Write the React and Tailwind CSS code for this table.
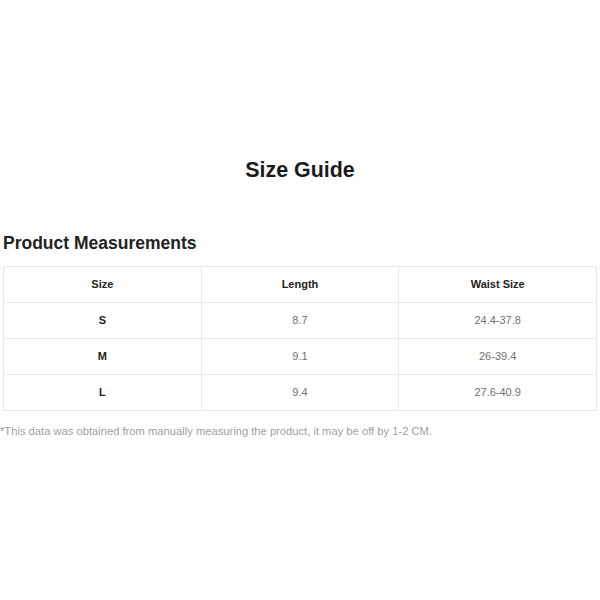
const rows = [
  { size: 'S', length: '8.7', waist: '24.4-37.8' },
  { size: 'M', length: '9.1', waist: '26-39.4' },
  { size: 'L', length: '9.4', waist: '27.6-40.9' },
];

export default function App() {
  return (
    <div className="w-[600px] h-[600px] bg-white px-[3px] pt-[158px] font-['Liberation_Sans',Arial,sans-serif]">
      <h1 className="text-center text-[21.4px] leading-[24px] font-bold text-[#1a1a1a]">Size Guide</h1>

      <h2 className="mt-[49px] mb-[11px] text-[17.5px] leading-[24px] font-bold text-[#222]">Product Measurements</h2>

      <table className="w-[594px] table-fixed border-collapse text-[11px]">
        <thead>
          <tr className="h-[36px]">
            <th className="border border-[#e8e8e8] font-bold text-[#222]">Size</th>
            <th className="border border-[#e8e8e8] font-bold text-[#222]">Length</th>
            <th className="border border-[#e8e8e8] font-bold text-[#222]">Waist Size</th>
          </tr>
        </thead>
        <tbody>
          {rows.map((r) => (
            <tr key={r.size} className="h-[36px] text-center">
              <td className="border border-[#e8e8e8] font-bold text-[#222]">{r.size}</td>
              <td className="border border-[#e8e8e8] text-[#707070]">{r.length}</td>
              <td className="border border-[#e8e8e8] text-[#707070]">{r.waist}</td>
            </tr>
          ))}
        </tbody>
      </table>

      <p className="mt-[12px] -ml-[3px] text-[11.2px] leading-[16px] text-[#a0a0a0]">
        *This data was obtained from manually measuring the product, it may be off by 1-2 CM.
      </p>
    </div>
  );
}
